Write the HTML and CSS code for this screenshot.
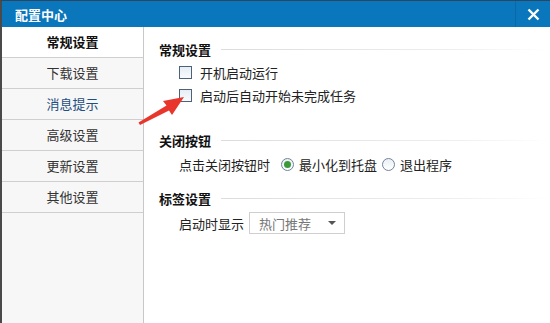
FILE: index.html
```html
<!DOCTYPE html>
<html lang="zh-CN">
<head>
    <meta charset="UTF-8">
    <title>配置中心</title>
    <link rel="stylesheet" href="styles.css">
</head>
<body>
    <div class="window">
        <!-- Title bar -->
        <header class="titlebar">
            <span class="title">配置中心</span>
            <button class="close" aria-label="关闭">
                <svg width="13" height="13" viewBox="0 0 13 13"><path d="M1.5 1.5 L11.5 11.5 M11.5 1.5 L1.5 11.5" stroke="#fff" stroke-width="2.4"/></svg>
            </button>
        </header>

        <div class="body">
            <!-- Side menu -->
            <ul class="menu">
                <li class="active">常规设置</li>
                <li>下载设置</li>
                <li class="hover">消息提示</li>
                <li>高级设置</li>
                <li>更新设置</li>
                <li>其他设置</li>
            </ul>

            <!-- Settings -->
            <main class="content">
                <section class="group general">
                    <h2><span>常规设置</span></h2>
                    <label class="row check"><span class="box"></span>开机启动运行</label>
                    <label class="row check"><span class="box"></span>启动后自动开始未完成任务</label>
                </section>

                <section class="group close-group">
                    <h2><span>关闭按钮</span></h2>
                    <div class="row">
                        <span class="label">点击关闭按钮时</span>
                        <label class="radio"><span class="dot on"></span>最小化到托盘</label>
                        <label class="radio"><span class="dot"></span>退出程序</label>
                    </div>
                </section>

                <section class="group tab-group">
                    <h2><span>标签设置</span></h2>
                    <div class="row">
                        <span class="label">启动时显示</span>
                        <div class="select">热门推荐<i class="caret"></i></div>
                    </div>
                </section>
            </main>

            <!-- Annotation arrow -->
            <svg class="arrow" width="60" height="40" viewBox="0 0 60 40">
                <polygon points="0.5,31.5 28.5,14.5 25,10 46,6 34,24 31,19.5 2,34" fill="#e8362c"/>
            </svg>
        </div>
    </div>
</body>
</html>
```

FILE: styles.css
```css
* {
    box-sizing: border-box;
}
body {
    margin: 0;
    font-family: "Noto Sans CJK SC", "DejaVu Sans", sans-serif;
    font-size: 12px;
    color: #222;
    background: #fff;
}
.window {
    width: 550px;
    height: 323px;
    display: flex;
    flex-direction: column;
    border-left: 2px solid #4a4a4a;
    border-top: 1px solid #2c4660;
}
.titlebar {
    height: 26px;
    background: #0a77bd;
    display: flex;
    align-items: center;
    justify-content: space-between;
    padding-left: 13px;
}
.title {
    color: #fff;
    font-weight: bold;
    font-size: 13px;
}
.close {
    width: 35px;
    height: 26px;
    border: none;
    border-left: 1px solid #0a68a5;
    background: transparent;
    padding: 0;
    display: flex;
    align-items: center;
    justify-content: center;
}
.body {
    flex: 1;
    display: flex;
    position: relative;
}
.menu {
    list-style: none;
    margin: 0;
    padding: 0;
    width: 142px;
    background: #f7f7f7;
    border-right: 1px solid #c8c8c8;
}
.menu li {
    height: 31px;
    line-height: 30px;
    text-align: center;
    font-size: 13px;
    border-bottom: 1px solid #cfcfcf;
    color: #333;
}
.menu li.active {
    background: #fff;
    font-weight: bold;
    color: #111;
}
.menu li.hover {
    color: #1f4e80;
}
.content {
    flex: 1;
    padding: 12px 0 0 15px;
}
.group h2 {
    margin: 0;
    font-size: 13px;
    font-weight: bold;
    display: flex;
    align-items: center;
    height: 20px;
    color: #111;
}
.group h2::after {
    content: "";
    flex: 1;
    height: 1px;
    margin-left: 10px;
    background: linear-gradient(to right, #dcdcdc, #eee 70%, #fff);
}
.row {
    display: flex;
    align-items: center;
    height: 23px;
    padding-left: 20px;
    font-size: 13px;
    color: #222;
}
.general h2 {
    margin-bottom: 2px;
}
.check .box {
    width: 13px;
    height: 13px;
    border: 1px solid #4d6276;
    background: linear-gradient(#e6eef5, #f8fbfd);
    margin-right: 8px;
}
.close-group {
    margin-top: 23px;
}
.close-group .row {
    height: 26px;
    padding-top: 2px;
}
.label {
    width: 102px;
}
.radio {
    display: flex;
    align-items: center;
    margin-right: 5px;
}
.dot {
    width: 13px;
    height: 13px;
    border-radius: 50%;
    border: 1px solid #71839a;
    background: linear-gradient(#eaf0f5, #fff);
    margin-right: 5px;
    position: relative;
}
.dot.on::after {
    content: "";
    position: absolute;
    left: 2px;
    top: 2px;
    width: 7px;
    height: 7px;
    border-radius: 50%;
    background: #3d9a3a;
}
.tab-group {
    margin-top: 12px;
}
.tab-group .row {
    height: 30px;
}
.tab-group .label {
    width: 70px;
}
.select {
    width: 96px;
    height: 22px;
    border: 1px solid #cfcfcf;
    color: #777;
    display: flex;
    align-items: center;
    justify-content: space-between;
    padding: 0 8px 0 9px;
}
.caret {
    width: 0;
    height: 0;
    border-left: 4px solid transparent;
    border-right: 4px solid transparent;
    border-top: 4px solid #555;
}
.arrow {
    position: absolute;
    left: 136px;
    top: 64px;
}
```
